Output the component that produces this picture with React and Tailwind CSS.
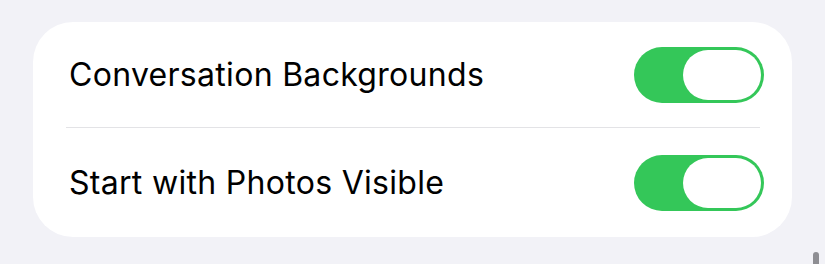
export default function App() {
  const Toggle = () => (
    <div className="w-[130px] h-[56px] rounded-full bg-[#34c759] p-[3px] flex justify-end">
      <div className="w-[78px] h-[50px] rounded-full bg-white" />
    </div>
  );
  return (
    <div className="w-[825px] h-[264px] bg-[#f2f2f7] relative overflow-hidden" style={{ fontFamily: 'Inter, "Noto Sans", sans-serif' }}>
      <div className="pt-[22px] pl-[33px]">
        <div className="w-[759px] h-[215px] bg-white rounded-[40px] pl-[33px] pr-[32px] flex flex-col">
          <div className="h-[106px] flex items-center justify-between border-b border-[#e3e3e6]">
            <span className="text-[32px] text-black tracking-[0.3px] pl-[3px]">Conversation Backgrounds</span>
            <div className="mr-[-4px]"><Toggle /></div>
          </div>
          <div className="flex-1 flex items-center justify-between">
            <span className="text-[32px] text-black tracking-[0.3px] pl-[3px]">Start with Photos Visible</span>
            <div className="mr-[-4px]"><Toggle /></div>
          </div>
        </div>
      </div>
      <div className="absolute left-[813px] top-[252px] w-[6px] h-[20px] rounded-full bg-[#8e8e93]" />
    </div>
  );
}
